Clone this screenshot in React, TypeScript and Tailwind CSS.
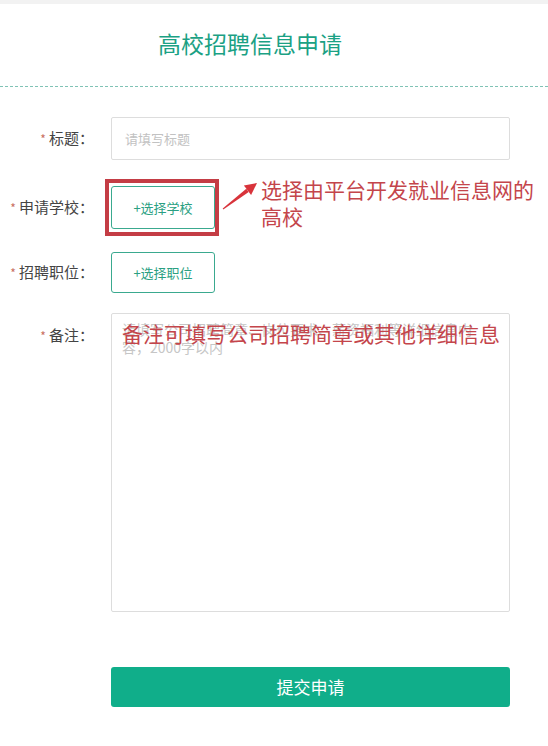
const font = { fontFamily: '"Noto Sans CJK SC", "Noto Sans", sans-serif' }

function Label({ text }: { text: string }) {
  return (
    <div className="w-[94px] shrink-0 text-right text-[15px] leading-[20px] text-[#444]">
      <span className="mr-[3px] text-[12px] text-[#c8705e]">*</span>
      {text}：
    </div>
  )
}

function PickButton({ text }: { text: string }) {
  return (
    <button className="h-full w-[104px] rounded-[3px] border border-[#3aa98f] bg-white text-[13px] text-[#2a9f82]">
      +{text}
    </button>
  )
}

export default function App() {
  return (
    <div className="relative min-h-[746px] w-[548px] bg-white" style={font}>
      <div className="h-[4px] bg-[#f2f2f2]" />
      <h1 className="pr-[48px] pt-[25px] pb-[29px] text-center text-[23px] leading-[28px] text-[#1ba184]">高校招聘信息申请</h1>
      <div className="border-t border-dashed border-[#7fc3b5]" />

      <div className="flex flex-col">
        <div className="mt-[30px] flex h-[43px] items-center">
          <Label text="标题" />
          <div className="ml-[17px] flex h-full w-[399px] items-center rounded-[2px] border border-[#dddddd] px-[13px] text-[13px] text-[#c2c2c2]">
            请填写标题
          </div>
        </div>

        <div className="mt-[26px] flex h-[43px] items-center">
          <Label text="申请学校" />
          <div className="relative ml-[17px] h-full">
            <PickButton text="选择学校" />
            <div className="absolute -left-[6px] -top-[7px] h-[57px] w-[114px] border-[4px] border-[#c43d45]" />
          </div>
        </div>

        <div className="mt-[23px] flex h-[41px] items-center">
          <Label text="招聘职位" />
          <div className="ml-[17px] h-full">
            <PickButton text="选择职位" />
          </div>
        </div>

        <div className="mt-[20px] flex items-start">
          <div className="pt-[12px]">
            <Label text="备注" />
          </div>
          <div className="relative ml-[17px] h-[299px] w-[399px] rounded-[2px] border border-[#dddddd] px-[10px] pt-[6px] text-[14px] leading-[18px] text-[#c6c6c6]">
            请填写公司招聘简章、岗位要求、薪资福利等详细信息内
            <br />
            容，2000字以内
            <div className="absolute left-[10px] top-[6px] text-[21px] leading-[26px] text-[#c4454b]">
              备注可填写公司招聘简章或其他详细信息
            </div>
          </div>
        </div>

        <div className="ml-[111px] mt-[55px] flex h-[40px] w-[399px] items-center justify-center rounded-[3px] bg-[#10ae8a] text-[17px] text-white">
          提交申请
        </div>
      </div>

      <svg className="absolute left-[218px] top-[178px]" width="44" height="36" viewBox="218 178 44 36">
        <polygon points="222.7,208.6 223.3,209.4 248.7,191.9 246.3,188.7" fill="#d8333b" />
        <polygon points="257,183 251.1,195.1 243.9,185.5" fill="#d8333b" />
      </svg>
      <div className="absolute left-[261px] top-[176px] text-[21px] leading-[27px] text-[#c4454b]">
        选择由平台开发就业信息网的
        <br />
        高校
      </div>
    </div>
  )
}
